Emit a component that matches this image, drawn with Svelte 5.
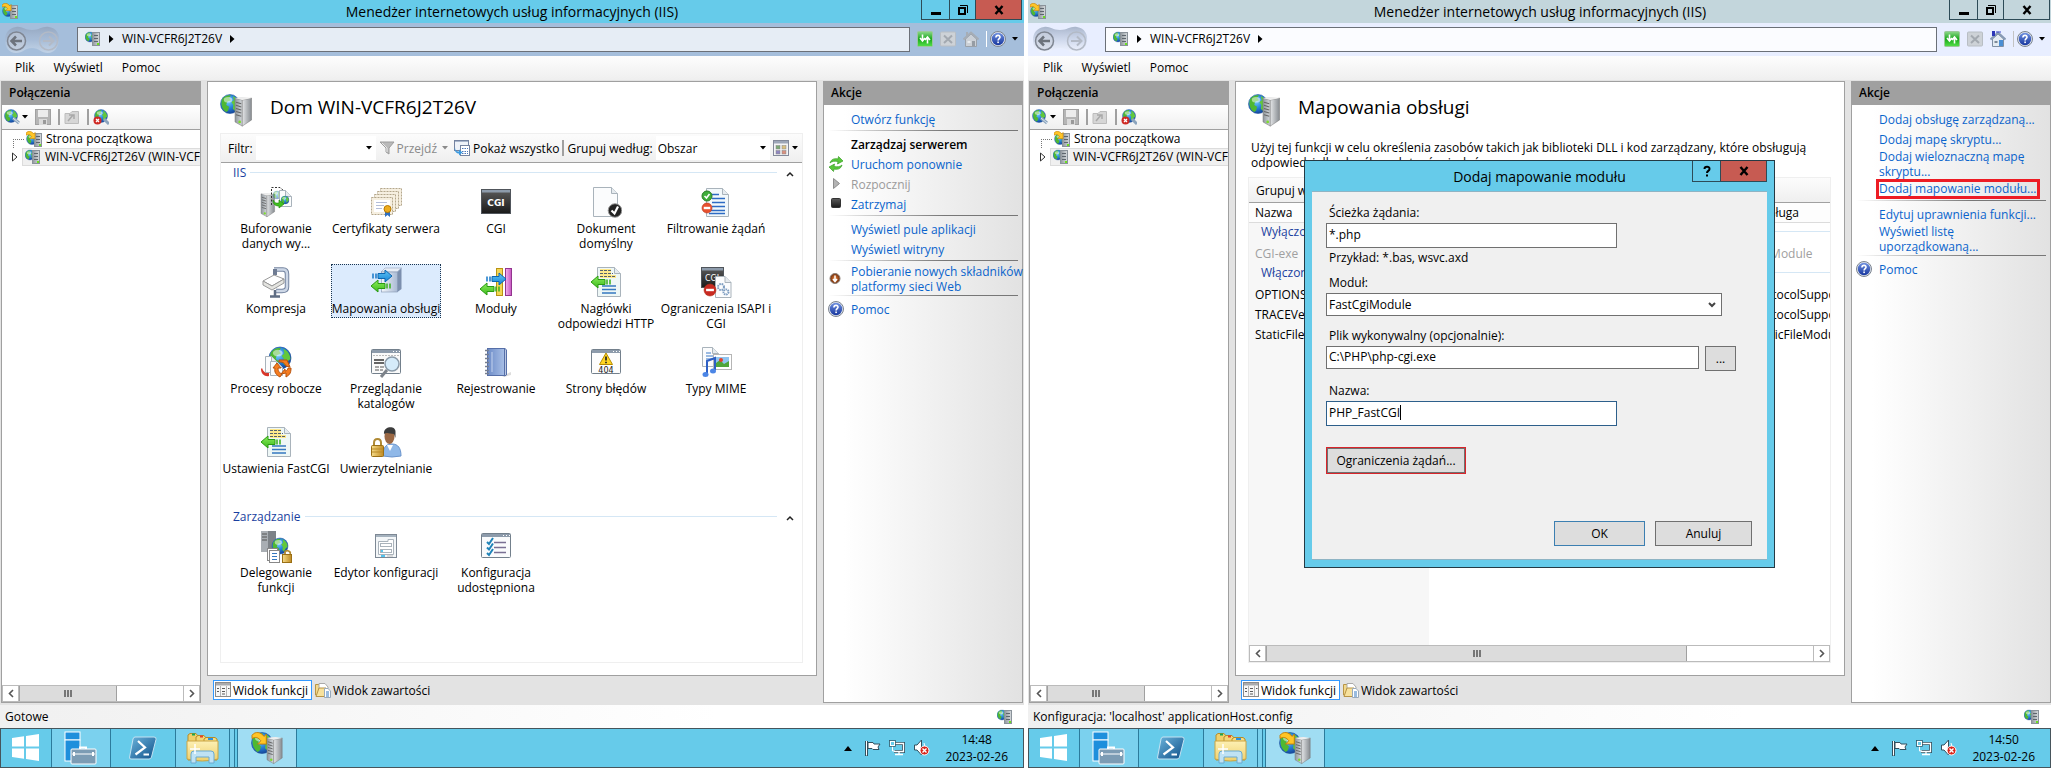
<script>
  const svg = (w, h, body) =>
    `<svg width="${w}" height="${h}" viewBox="0 0 ${w} ${h}" fill="none" aria-hidden="true">${body}</svg>`;

  // shared drawing parts
  const globe = (cx, cy, r) =>
    `<g transform="translate(${cx} ${cy}) scale(${r / 10})">
      <circle r="10" fill="url(#gGlobe)" stroke="#1d4f9c" stroke-width=".6"/>
      <path d="M-8.500 -4.500C-6 -9 -1 -9.500 1 -9L-1 -6.500L1 -4L-3 -2.500L-4 1L-1 3L-2 7L-4 8.500C-8 6 -10 1 -8.500 -4.500Z" fill="#4fb832"/>
      <path d="M3 -8.500C7 -7 9.500 -3 9.500 1L7 3L5 7L3 5L3.500 1L1.500 -2L4 -4Z" fill="#62c83c"/>
      <ellipse cx="-2" cy="-4.500" rx="4.500" ry="3" fill="#fff" opacity=".5"/></g>`;
  const tower = (x, y, s) =>
    `<g transform="translate(${x} ${y}) scale(${s})">
      <path d="M0 1L9 0V26L0 22Z" fill="#d3d7da"/><path d="M0 1L7 3V28L0 24Z" fill="url(#gMetal)" stroke="#777" stroke-width=".5"/>
      <path d="M7 3L16 1V22L7 28Z" fill="url(#gSide)" stroke="#777" stroke-width=".5"/><path d="M0 1L9 0L16 1L7 3Z" fill="#eee"/>
      <path d="M1 5L6 6.500M1 8L6 9.500M1 11L6 12.500M1 14L6 15.500M1 17L6 18.500" stroke="#666"/>
      <circle cx="4.500" cy="24" r="1.300" fill="#7bdc2c"/></g>`;
  const miniTower = (x, y) =>
    `<g transform="translate(${x} ${y})"><rect x=".5" y=".5" width="7" height="13" fill="url(#gMetal)" stroke="#8a929a"/>
      <path d="M2 3.500H6M2 6.500H6M2 9.500H6" stroke="#5e666e"/><rect x="5" y="11" width="2" height="2" fill="#6be01e"/></g>`;
  const page = (x, y, w, h, fill = '#fbfcfd') =>
    `<path d="M${x} ${y}H${x + w - 6}L${x + w} ${y + 6}V${y + h}H${x}Z" fill="${fill}" stroke="#a9b3bb"/>
     <path d="M${x + w - 6} ${y}V${y + 6}H${x + w}" fill="#e6ebef" stroke="#a9b3bb"/>`;
  const greenLeft = (x, y) =>
    `<g transform="translate(${x} ${y})"><path d="M0 6L7 0V3.500H14V8.500H7V12Z" fill="url(#gGreen)" stroke="#2b9a12"/>
      <path d="M16 3.500V8.500M19 3.500V8.500" stroke="#36b11a" stroke-width="1.500"/></g>`;
  const blueRight = (x, y) =>
    `<g transform="translate(${x} ${y})"><path d="M20 6L13 0V3.500H6V8.500H13V12Z" fill="url(#gBlue)" stroke="#0d66b0"/>
      <path d="M1 3.500V8.500M4 3.500V8.500" stroke="#1577c8" stroke-width="1.500"/></g>`;
  const goldArrow = (x, y, s) =>
    `<path transform="translate(${x} ${y}) scale(${s})" d="M0 3C3 -1 8 0 11 4L13 2V11H5L8 8C6 5 3 4 0 6Z" fill="#ffc527" stroke="#c07a00" stroke-width=".8"/>`;
  const frame = (fill) =>
    `<rect x="1.500" y="3.500" width="29" height="24" rx="1" fill="${fill}" stroke="#73808c"/>
     <rect x="2" y="4" width="28" height="3" fill="#8d9bab"/><path d="M23 5.500H24M26 5.500H27M29 5.500H30" stroke="#fff"/>`;
  const noEntry = (cx, cy, r, c) =>
    `<circle cx="${cx}" cy="${cy}" r="${r}" fill="${c}" stroke="#b3341c" stroke-width=".6"/><rect x="${cx - r * 0.65}" y="${cy - 1.2}" width="${r * 1.3}" height="2.400" fill="#fff"/>`;
  const headerDoc =
    page(7.5, 1.5, 23, 29, '#eef7f6') +
    `<path d="M10 4.500H21M10 7.500H21M10 10.500H26" stroke="#ffe88a" stroke-width="3"/>
     <path d="M10 4.500H21M10 7.500H23M10 10.500H26" stroke="#55606c" stroke-dasharray="3 1"/>
     <path d="M12 20H26M12 23.500H26M12 27H26" stroke="#3578c0" stroke-width="1.500"/>` + greenLeft(1, 10);

  const icons = {
    app: svg(16, 16, globe(6, 8, 5.5) + miniTower(8, 2) + goldArrow(0, 0, 0.7)),
    node: svg(16, 16, globe(5, 6, 5) + miniTower(7, 1)),
    connect: svg(16, 16, globe(7, 7, 6.5) + `<path d="M9 9L15 14" stroke="#8ba4bd" stroke-width="3"/><path d="M9 9L15 14" stroke="#d8e4ee"/>`),
    disconnect: svg(16, 16, globe(8, 7, 6.5) + `<path d="M11 10L16 15" stroke="#8ba4bd" stroke-width="3"/><circle cx="4.500" cy="11.500" r="4" fill="#cf2a24"/><path d="M3 10L6 13M6 10L3 13" stroke="#fff" stroke-width="1.300"/>`),
    save: svg(16, 16, `<rect x=".5" y=".5" width="15" height="15" fill="#b5b5b5" stroke="#a0a0a0"/><rect x="3" y="1" width="10" height="7" fill="#ececec"/><rect x="4" y="10" width="8" height="6" fill="#dadada"/><rect x="8" y="11" width="3" height="4" fill="#999"/>`),
    folderUp: svg(16, 16, `<path d="M1 4.500H6L8 2.500H14.500V14.500H1Z" fill="#d6d6d6" stroke="#bcbcbc"/><path d="M4 12L9 6M5 6H10V10" stroke="#a9a9a9" stroke-width="1.500"/>`),
    refresh: svg(16, 16, `<rect x=".5" y=".5" width="15" height="15" rx="1" fill="url(#gGreenBox)" stroke="#9cc79c"/><path d="M5.500 3.500V9M3 7L5.500 10L8 7M10.500 12.500V7M8 9L10.500 6L13 9" stroke="#fff" stroke-width="1.600"/>`),
    stopNav: svg(16, 16, `<rect x=".5" y="1" width="15" height="14" rx="1" fill="#cdd2d7" stroke="#b8bec4"/><path d="M4 4.500L12 12M12 4.500L4 12" stroke="#a3a9b0" stroke-width="2"/>`),
    homeGray: svg(16, 16, `<path d="M2.500 8V15.500H13.500V8L8 3Z" fill="#cbd0d6" stroke="#9aa1a9"/><path d="M.5 8.500L8 1.500L15.500 8.500" stroke="#a6adb5" stroke-width="2"/><rect x="3" y="1" width="2" height="4" fill="#a6adb5"/><rect x="9" y="10" width="3" height="5" fill="#959ca4"/><rect x="4.500" y="10" width="3" height="2" fill="#e8ebee"/>`),
    home: svg(16, 16, `<path d="M2.500 8V15.500H13.500V8L8 3Z" fill="#e4ebf2" stroke="#8090a4"/><path d="M.5 8.500L8 1.500L15.500 8.500" stroke="#8699b4" stroke-width="2"/><rect x="2" y="0" width="3" height="5" fill="#2b35b8"/><path d="M6 1H11" stroke="#3a46c8"/><rect x="9" y="9" width="4" height="6" fill="#4b8fd4"/><rect x="4.500" y="10" width="3" height="2" fill="#7d8a98"/>`),
    help: svg(16, 16, `<circle cx="8" cy="8" r="7.500" fill="#dfe5ee" stroke="#7c848f"/><circle cx="8" cy="8" r="6.200" fill="url(#gHelp)"/><path d="M5.900 6.500C6 3.600 10.200 3.800 10 6.300C9.900 7.700 8.100 7.700 8.100 9.500" stroke="#fff" stroke-width="1.600"/><rect x="7.300" y="10.500" width="1.600" height="1.600" fill="#fff"/>`),
    funnel: svg(16, 16, `<path d="M1 2H15L10 8V14L7 12V8Z" fill="#b9b9b9" stroke="#9c9c9c"/><path d="M3 3L8 8V12" stroke="#e9e9e9"/>`),
    showAll: svg(16, 16, `<rect x=".5" y=".5" width="14" height="10" fill="#eef2f8" stroke="#7583a0"/><path d="M1 1.500H14" stroke="#a9b6cc"/><rect x="6.500" y="5.500" width="9" height="10" fill="#fff" stroke="#7583a0"/><path d="M8 8.500H14M8 11.500H14M8 13.500H14" stroke="#4b76b8" stroke-dasharray="1.500 1"/><path d="M1 7C1 11 3 11.500 5 11.500V9.500L8.500 12.500L5 15.500V13.500C2 13.500 0 11 1 7Z" fill="#3d9be0"/>`),
    viewMode: svg(16, 16, `<rect x=".5" y=".5" width="15" height="15" fill="#f4f4f6" stroke="#83899a"/><rect x="1" y="1" width="14" height="2.500" fill="#9da6b8"/><rect x="3" y="5.500" width="4" height="3.500" fill="#7ba874" stroke="#888" stroke-width=".5"/><rect x="9" y="5.500" width="4" height="3.500" fill="#d9bf80" stroke="#888" stroke-width=".5"/><rect x="3" y="10.500" width="4" height="3.500" fill="#8f86c0" stroke="#888" stroke-width=".5"/><rect x="9" y="10.500" width="4" height="3.500" fill="#d9907f" stroke="#888" stroke-width=".5"/>`),
    restart: svg(16, 16, `<path d="M2 7C3 3 7 2 10 3L10.500 .5L15 5L9.500 8L10 5.500C7 5 4 5 2 7Z" fill="#58c83a" stroke="#3a9c26" stroke-width=".7"/><path d="M14 9C13 13 9 14 6 13L5.500 15.500L1 11L6.500 8L6 10.500C9 11 12 11 14 9Z" fill="#58c83a" stroke="#3a9c26" stroke-width=".7"/>`),
    play: svg(16, 16, `<path d="M5.500 2.500L11.500 7.500L5.500 12.500Z" fill="#b4b4b4" stroke="#8e8e8e"/>`),
    stop: svg(16, 16, `<rect x="3.500" y="2.500" width="9" height="9" rx="1" fill="url(#gDark)" stroke="#333"/>`),
    download: svg(16, 16, `<circle cx="7" cy="7.500" r="5" fill="url(#gBrown)" stroke="#8b8078"/><path d="M7 4.500V10M5 8L7 10.500L9 8" stroke="#fff" stroke-width="1.500"/>`),
    featuresTab: svg(16, 16, `<rect x=".5" y=".5" width="15" height="14" fill="#f7f7f7" stroke="#8a8a8a"/><rect x="1" y="1" width="14" height="2.500" fill="#a9abae"/><path d="M5.500 4V14M11.500 4V14" stroke="#b5b5b5"/><path d="M2 6.500H4M2 9.500H4M7 6.500H10M7 9.500H10M7 12H10M13 6.500H14.500" stroke="#5b5b5b"/>`),
    contentTab: svg(16, 16, `<path d="M.5 13V2.500H5L6.500 4H8V13Z" fill="#f3d98b" stroke="#b89446"/><path d="M4 1.500H10L13 5V13H4Z" fill="#fff" stroke="#aaa"/><path d="M1 14.500L4 6H11V14.500Z" fill="#f7e19c" stroke="#b89446"/><path d="M9.500 6.500H13L15.500 9V15.500H9.500Z" fill="#fff" stroke="#9ab"/><path d="M11 10H14M11 12H14M11 14H14" stroke="#3578c0"/>`),

    iisBig: svg(32, 34, globe(10, 11, 9.5) + tower(15, 4, 1.04)),
    caching: svg(32, 32, tower(1, 7, 0.85) + `<path d="M11.500 19V1.500H20L24 5V8" stroke="#333" stroke-dasharray="2 1.500"/>` + `<g opacity=".5">${globe(17, 9, 4)}</g>` + page(19.5, 4.5, 12, 16) + globe(25, 14, 4) + `<path d="M13 14C15 18 17 17 19 17V14L24 18L19 22V20C15 20 13 18 13 14Z" fill="#42c21f" stroke="#258a10" stroke-width=".7"/>`),
    certs: svg(32, 32, `<g fill="#f6efe0" stroke="#b4a78c" stroke-dasharray="2 1"><rect x="10.500" y="2.500" width="21" height="17"/><rect x="7.500" y="5.500" width="21" height="17"/><rect x="4.500" y="8.500" width="21" height="17"/><rect x="1.500" y="11.500" width="21" height="17"/></g><rect x="4" y="14" width="16" height="12" fill="#fff"/><path d="M6 16.500H17M6 19.500H14M6 22.500H12" stroke="#b4bed8"/><path d="M15 24V31L17.500 29L20 31V24Z" fill="#2f6fc0"/><circle cx="17.500" cy="23" r="3.500" fill="#edac1f" stroke="#b67800"/>`),
    cgi: svg(32, 32, `<rect x="1.500" y="3.500" width="29" height="24" fill="url(#gDark)" stroke="#50555b"/><rect x="2" y="4" width="28" height="2.500" fill="#8d9bab"/><text x="16" y="19.500" text-anchor="middle" font-family="DejaVu Sans, sans-serif" font-weight="bold" font-size="9" fill="#fff">CGI</text>`),
    defaultDoc: svg(32, 32, page(3.5, 1.5, 24, 29) + `<circle cx="25" cy="24.500" r="6.800" fill="#222" stroke="#9a9a9a"/><path d="M21.500 24.500L24.500 27.500L28 20.500" stroke="#fff" stroke-width="2.200"/>`),
    filtering: svg(32, 32, page(6.5, 2.5, 22, 28, '#f2f8fb') + `<path d="M12 8.500H19M12 12.500H25M12 16.500H25M12 20.500H25M9 24.500H25M9 27.500H25" stroke="#2d6bc4" stroke-width="1.300"/><circle cx="7" cy="10" r="5" fill="#3fae3a" stroke="#287c26"/><path d="M4.500 10L6.500 12L9.500 8" stroke="#fff" stroke-width="1.600"/>` + noEntry(7, 22, 5, '#e8512f')),
    compress: svg(32, 32, `<path d="M14 3.500H23Q27 3.500 27 8V21Q27 25 22 25H16" stroke="#7484a0" stroke-width="4.500"/><path d="M14 3.500H23Q27 3.500 27 8V21Q27 25 22 25H16" stroke="#cdd7e6" stroke-width="2.500"/><path d="M15 3V9" stroke="#6e7b92" stroke-width="4"/><path d="M3 15L14 9L24 13L12 20Z" fill="#fff" stroke="#999"/><path d="M3 15V19L12 24L24 17V13L12 20Z" fill="#e4e4e0" stroke="#999"/><path d="M15 24V30M10 30.500H20" stroke="#5f6d84" stroke-width="2.500"/>`),
    handlers: svg(32, 32, `<path d="M11 6L15 2H31.500L27 6Z" fill="#e9eef6" stroke="#93a3bd" stroke-width=".6"/><rect x="11.500" y="6" width="16" height="20" fill="url(#gBox)" stroke="#8293b0" stroke-width=".6"/><path d="M27.500 6L31.500 2V23L27.500 26Z" fill="#7c8fae"/>` + blueRight(2, 4) + greenLeft(1, 14)),
    modules: svg(32, 32, `<rect x="16.500" y="2.500" width="6" height="27" fill="#f2d654" stroke="#b99312"/><rect x="25.500" y="2.500" width="6" height="27" fill="url(#gPink)" stroke="#92348e"/>` + blueRight(6, 7) + greenLeft(0, 17)),
    headers: svg(32, 32, headerDoc),
    isapi: svg(32, 32, `<rect x="1.500" y="1.500" width="22" height="20" fill="url(#gDark)" stroke="#50555b"/><rect x="2" y="2" width="21" height="2.500" fill="#8d9bab"/><text x="12" y="15" text-anchor="middle" font-family="DejaVu Sans, sans-serif" font-size="8" fill="#fff">CGI</text>` + page(15.5, 10.5, 15.5, 21) + `<circle cx="21" cy="21" r="3" stroke="#7c9cc0" stroke-width="2" stroke-dasharray="1.600 .8"/><circle cx="26" cy="26" r="2.500" stroke="#7c9cc0" stroke-width="2" stroke-dasharray="1.500 .7"/>` + noEntry(10, 24, 6, '#c92a22')),
    workers: svg(32, 32, globe(20, 12, 11) + page(5.5, 10.5, 12, 16) + page(10.5, 15.5, 12, 14) + `<path d="M2 22C4 28 8 27 9 27V30C5 31 1 28 1 23Z" fill="#d8362a"/><path d="M19 14H27L30 21L26 20C24 16 22 16 19 16Z" fill="#f57c20" stroke="#b8520c"/><path d="M13 22L17 17L21 22H18C18 26 20 27 22 28L20 31C16 29 14 26 15 22Z" fill="#f57c20" stroke="#b8520c"/><path d="M31 22C31 28 29 29 26 31V27L21 28L25 23V25C27 25 28 23 28 22Z" fill="#f57c20" stroke="#b8520c"/>`),
    browse: svg(32, 32, frame('#fafafa') + `<path d="M3 9.500H29" stroke="#bbb" stroke-dasharray="2 1"/><path d="M4 14H14M4 17H14" stroke="#333" stroke-width="1.500"/><path d="M5 21H14M5 24H13" stroke="#555" stroke-dasharray="4 1"/><path d="M17 24L11 31" stroke="#7d838a" stroke-width="3"/><circle cx="22" cy="18" r="7" fill="#d5ebfa" stroke="#8a9aa8" stroke-width="1.500"/>`),
    logging: svg(32, 32, `<path d="M22 30L31 26V29L24 31Z" fill="#ddd"/><rect x="7.500" y="2.500" width="17" height="27" fill="url(#gBook)" stroke="#566fa8"/><path d="M24.500 2L26.500 4V29L24.500 30Z" fill="#b9c8e4" stroke="#566fa8"/><path d="M5 4.500H9M5 8.500H9M5 12.500H9M5 16.500H9M5 20.500H9M5 24.500H9M5 27.500H9" stroke="#777f90" stroke-width="1.500"/><path d="M12 6V26" stroke="#c4d3ee"/>`),
    errors: svg(32, 32, frame('#fdfdfd') + `<path d="M16 7L22.500 18.500H9.500Z" fill="#ffd521" stroke="#b48a00"/><path d="M16 10.500V14.500M16 15.700V17.300" stroke="#222" stroke-width="1.700"/><text x="16" y="26.500" text-anchor="middle" font-family="DejaVu Sans, sans-serif" font-size="8" fill="#222">404</text>`),
    mime: svg(32, 32, page(2.5, 1.5, 16, 19) + `<path d="M6 7H11M6 10H15M6 13H15" stroke="#3b79c6"/><rect x="13.500" y="8.500" width="18" height="15" fill="#fff" stroke="#b5b5b5"/><rect x="16" y="11" width="13" height="10" fill="#8fc4f0"/><path d="M16 21V17L20 14L24 18L29 15V21Z" fill="#4fa53a"/><circle cx="21" cy="14" r="2" fill="#e2412b"/><path d="M7 28V15L15 12V24" stroke="#2d5fc4" stroke-width="2"/><ellipse cx="5.500" cy="28.500" rx="3" ry="2.500" fill="#4c86e6"/><ellipse cx="13" cy="25" rx="3" ry="2.500" fill="#4c86e6"/>`),
    auth: svg(32, 32, `<path d="M13 30C13 20 17 18 22 18C28 18 31 22 31 30Q22 32 13 30Z" fill="#8fb8e8" stroke="#6a94cc"/><path d="M17 19L20 25L23 19Z" fill="#fff"/><ellipse cx="19.500" cy="10.500" rx="5" ry="7.500" fill="#9b6844"/><path d="M14 8C13 0 26 -1 25.500 6V12L24 8C20 8 17 6 14 8Z" fill="#3c3c3c"/><path d="M4 20V17Q4 13 7.500 13Q11 13 11 17V20" stroke="#b08a34" stroke-width="2"/><rect x="1.500" y="19.500" width="12" height="11" rx="1" fill="url(#gGold)" stroke="#9a6f15"/><path d="M2 23H13M2 26H13" stroke="#b98a28"/>`),
    delegation: svg(32, 34, `<rect x="1" y="1" width="7" height="21" fill="#a9aeb3"/><rect x="8" y="1" width="8" height="21" fill="#7d8287"/><path d="M2 4H7M2 7H7M2 10H7" stroke="#555"/>` + globe(20, 16, 8) + `<rect x="7.500" y="18.500" width="10" height="12" fill="#fff" stroke="#888"/><rect x="9.500" y="20.500" width="10" height="12" fill="#fff" stroke="#888"/><path d="M12 23.500H17M12 26.500H17M12 29.500H17" stroke="#3578c0"/><path d="M25 24V22Q26 20 28.500 21Q31 22 30 24" stroke="#b08a34" stroke-width="1.800"/><rect x="22.500" y="24.500" width="9" height="8" fill="url(#gGold)" stroke="#9a6f15"/>`),
    editor: svg(32, 32, `<rect x="5.500" y="4.500" width="21" height="23" fill="#f3f6f8" stroke="#7d8894"/><path d="M6 6H26" stroke="#a5b2be" stroke-width="2"/><path d="M8.500 11.500V24.500H23.500V9.500H18V11.500Z" fill="#fff" stroke="#aab3bb"/><rect x="10.500" y="13.500" width="11" height="3" stroke="#aab3bb"/><rect x="10.500" y="19.500" width="11" height="3" stroke="#aab3bb"/><path d="M11 21H13M11 26H15" stroke="#21b1e6" stroke-width="1.500"/><path d="M17 26H23" stroke="#bbb"/>`),
    shared: svg(32, 32, frame('#fafbfc') + `<path d="M14 12.500H26M14 17.500H26M14 22.500H26" stroke="#7a7094" stroke-width="1.300"/><path d="M7 12L9 14L13 8M7 17.500L9 19.500L13 13.500M7 23L9 25L13 19" stroke="#1f83b8" stroke-width="2"/>`),

    start: svg(28, 28, `<path d="M0 4L12 2.300V12.500H0ZM14 2L27 0V12.500H14ZM0 14.500H12V24.700L0 23ZM14 14.500H27V27L14 25Z" fill="#fff"/>`),
    serverMgr: svg(34, 34, `<rect x="1" y="1" width="15" height="8" fill="#1e8fdc" stroke="#fff"/><rect x="1" y="9" width="15" height="21" fill="#1e8fdc" stroke="#fff"/><path d="M16 18V16.500H22V18" stroke="#fff" stroke-width="2"/><rect x="7" y="18" width="25" height="15" rx="1" fill="#7c9cb4" stroke="#fff"/><path d="M8 23H31" stroke="#fff"/><path d="M10 21V25M29 21V25" stroke="#fff" stroke-width="2"/>`),
    powershell: svg(28, 24, `<path d="M6 1H25Q27.500 1 27 3.500L22.500 21Q22 23 20 23H2Q0 23 .6 21L4 3Q4.500 1 6 1Z" fill="url(#gPs)" stroke="#c4e2f2"/><path d="M9 5L16 11.500L6.500 18.500M14.500 18.500H20" stroke="#fff" stroke-width="2.200"/>`),
    explorer: svg(34, 32, `<path d="M2 28V3L4 1.500H10L12 4V28Z" fill="#f0d06a" stroke="#b48d2c"/><path d="M10 28V5L12 3.500H18L20 6V28Z" fill="#f3d778" stroke="#b48d2c"/><path d="M18 28V7L20 5.500H29L31 7V28Z" fill="#f5dc84" stroke="#b48d2c"/><rect x="6" y="1.500" width="3" height="2" fill="#1ba54c"/><rect x="14" y="3.500" width="3" height="2" fill="#e4402c"/><rect x="22" y="6" width="5" height="2" fill="#2a92e4"/><path d="M1 9H32V27Q16 31 1 27Z" fill="url(#gFolder)" stroke="#caa544"/><path d="M5 31V22Q5 19 8 19H25Q28 19 28 22V31H23V25H10V31Z" fill="#bfe2f4" stroke="#6aaad0"/><path d="M9 12V22M4 17H14" stroke="#fff" stroke-width="1.500"/>`),
    iisTask: svg(32, 34, globe(11, 12, 10.5) + tower(16, 6, 0.95) + goldArrow(1, 1, 1.1)),
    flag: svg(16, 16, `<path d="M1.500 1V16" stroke="#33505e" stroke-width="3"/><path d="M3 2.500H8L9 4H15L13 7L14 9.500H8L7 8.500H3Z" fill="#fff" stroke="#33505e"/><path d="M1.500 1V15.500" stroke="#fff"/>`),
    network: svg(16, 16, `<path d="M5 3.500H14.500V11.500H5" fill="#66cbea" stroke="#33505e" stroke-width="3"/><path d="M5 3.500H14.500V11.500H5M10 12V14.500M6 14.500H14" stroke="#fff" stroke-width="1.300"/><rect x="1.500" y="1.500" width="4" height="4" fill="#66cbea" stroke="#fff"/><path d="M3.500 6V11H6" stroke="#fff"/><rect x=".5" y=".5" width="6" height="6" stroke="#33505e" stroke-width=".7"/>`),
    sound: svg(18, 18, `<path d="M1.500 6H4L8.500 1V16L4 11H1.500Z" fill="#fff" stroke="#33505e"/><path d="M11 4Q13 8 11 12" stroke="#fff"/><circle cx="11.500" cy="11.500" r="4.500" fill="#d8261c" stroke="#fff"/><path d="M9.500 9.500L13.500 13.500M13.500 9.500L9.500 13.500" stroke="#fff" stroke-width="1.400"/>`),
    nav: svg(56, 28, `<path d="M12 1C18 0 20 4 28 4C36 4 38 0 45 1C53 2 56 9 55 15C54 22 50 27 44 27C37 27 35 22 28 22C21 22 19 27 12 27C5 27 1 21 1 14C1 7 5 2 12 1Z" fill="url(#gNav)"/><g stroke="#7f8692"><circle cx="12.500" cy="15" r="9" fill="#c9d0da" fill-opacity=".5" stroke-width="1.500"/><path d="M18 15H8M12 10.500L7.500 15L12 19.500" stroke="#6d737c" stroke-width="2.500"/></g><g stroke="#b3bac6"><circle cx="44.500" cy="15" r="9" stroke-width="1.500"/><path d="M39 15H48M45 10.500L49.500 15L45 19.500" stroke-width="2"/></g>`),
    min: svg(12, 12, `<path d="M1 9.500H11" stroke="#000" stroke-width="3"/>`),
    restore: svg(12, 12, `<rect x="2" y="4" width="6" height="6" stroke="#000" stroke-width="2"/><path d="M3 1.500H10.500V9" stroke="#000"/>`),
    close: svg(12, 12, `<path d="M2.500 2L9.500 10M9.500 2L2.500 10" stroke="#000" stroke-width="2.400"/>`),
    quest: svg(12, 12, `<path d="M3.500 4C3.500 1 8.700 1 8.500 4C8.500 6 6 5.800 6 8M6 9.500V11.500" stroke="#000" stroke-width="2"/>`),
    down: svg(6, 4, `<path d="M0 0H6L3 3.500Z" fill="#000"/>`),
    downGray: svg(6, 4, `<path d="M0 0H6L3 3.500Z" fill="#8a8a8a"/>`),
    right: svg(5, 8, `<path d="M0 0L4.500 4L0 8Z" fill="#000"/>`),
    up: svg(8, 5, `<path d="M0 5L4 0L8 5Z" fill="#000"/>`),
    chevUp: svg(8, 6, `<path d="M1 5L4 2L7 5" stroke="#222" stroke-width="1.500"/>`),
    chevDown: svg(8, 6, `<path d="M1 1L4 4L7 1" stroke="#444" stroke-width="2"/>`),
    chevLeft: svg(6, 9, `<path d="M5 1L1.500 4.500L5 8" stroke="#555" stroke-width="1.600"/>`),
    chevRight: svg(6, 9, `<path d="M1 1L4.500 4.500L1 8" stroke="#555" stroke-width="1.600"/>`),
    expand: svg(6, 10, `<path d="M.5 1L5 5L.5 9Z" fill="#fff" stroke="#333"/>`),
  };

  const groups = [
    { title: 'IIS', items: [
      ['caching', 'Buforowanie\ndanych wy...'], ['certs', 'Certyfikaty serwera'], ['cgi', 'CGI'],
      ['defaultDoc', 'Dokument\ndomyślny'], ['filtering', 'Filtrowanie żądań'],
      ['compress', 'Kompresja'], ['handlers', 'Mapowania obsługi'], ['modules', 'Moduły'],
      ['headers', 'Nagłówki\nodpowiedzi HTTP'], ['isapi', 'Ograniczenia ISAPI i\nCGI'],
      ['workers', 'Procesy robocze'], ['browse', 'Przeglądanie\nkatalogów'], ['logging', 'Rejestrowanie'],
      ['errors', 'Strony błędów'], ['mime', 'Typy MIME'],
      ['headers', 'Ustawienia FastCGI'], ['auth', 'Uwierzytelnianie'],
    ] },
    { title: 'Zarządzanie', items: [
      ['delegation', 'Delegowanie\nfunkcji'], ['editor', 'Edytor konfiguracji'], ['shared', 'Konfiguracja\nudostępniona'],
    ] },
  ];

  const serverActions = [
    [{ text: 'Otwórz funkcję' }],
    [
      { text: 'Zarządzaj serwerem', heading: true },
      { text: 'Uruchom ponownie', icon: 'restart' },
      { text: 'Rozpocznij', icon: 'play', disabled: true },
      { text: 'Zatrzymaj', icon: 'stop' },
    ],
    [{ text: 'Wyświetl pule aplikacji' }, { text: 'Wyświetl witryny' }],
    [{ text: 'Pobieranie nowych składników\nplatformy sieci Web', icon: 'download' }],
    [{ text: 'Pomoc', icon: 'help' }],
  ];
  const handlerActions = [
    [
      { text: 'Dodaj obsługę zarządzaną...' },
      { text: 'Dodaj mapę skryptu...' },
      { text: 'Dodaj wieloznaczną mapę\nskryptu...' },
      { text: 'Dodaj mapowanie modułu...', marked: true },
    ],
    [{ text: 'Edytuj uprawnienia funkcji...' }, { text: 'Wyświetl listę\nuporządkowaną...' }],
    [{ text: 'Pomoc', icon: 'help' }],
  ];

  let selected = $state('Mapowania obsługi');
  let path = $state('*.php');
  let executable = $state('C:\\PHP\\php-cgi.exe');
  let name = $state('PHP_FastCGI');
</script>

{#snippet ic(n)}<span class="ic">{@html icons[n]}</span>{/snippet}

{#snippet scrollbar(thumb)}
  <div class="scrollbar">
    <button aria-label="Przewiń w lewo">{@render ic('chevLeft')}</button>
    <div class="track"><div class="thumb" style="width: {thumb}%"><i></i><i></i><i></i></div></div>
    <button aria-label="Przewiń w prawo">{@render ic('chevRight')}</button>
  </div>
{/snippet}

{#snippet featuresView()}
  <div class="heading">{@render ic('iisBig')}<h1>Dom WIN-VCFR6J2T26V</h1></div>
  <div class="box">
    <div class="filterbar">
      <label for="filter">Filtr:</label>
      <div class="combo filter"><input id="filter" type="text" />{@render ic('down')}</div>
      <button class="tool go" disabled>{@render ic('funnel')}Przejdź {@render ic('downGray')}</button>
      <button class="tool">{@render ic('showAll')}Pokaż wszystko</button>
      <span class="vsep"></span>
      <label for="group">Grupuj według:</label>
      <div class="combo group"><select id="group"><option>Obszar</option></select>{@render ic('down')}</div>
      <button class="tool" aria-label="Widok">{@render ic('viewMode')}{@render ic('down')}</button>
    </div>
    {#each groups as g}
      <section class="feature-group">
        <h2>{g.title}<span class="rule"></span><button aria-label="Zwiń">{@render ic('chevUp')}</button></h2>
        <div class="features">
          {#each g.items as [icon, label]}
            <button class="feature" class:selected={selected === label} onclick={() => (selected = label)}>
              {@render ic(icon)}<span>{label}</span>
            </button>
          {/each}
        </div>
      </section>
    {/each}
  </div>
{/snippet}

{#snippet handlersView()}
  <div class="heading">{@render ic('iisBig')}<h1>Mapowania obsługi</h1></div>
  <p class="intro">{'Użyj tej funkcji w celu określenia zasobów takich jak biblioteki DLL i kod zarządzany, które obsługują\nodpowiedzi dla określonych typów żądań.'}</p>
  <div class="box list">
    <div class="filterbar low"><span>Grupuj według:</span></div>
    <div class="table-area">
      <table>
        <colgroup><col class="c-name" /><col /><col class="c-handler" /></colgroup>
        <thead><tr><th>Nazwa</th><th></th><th>Obsługa</th></tr></thead>
        <tbody>
          <tr class="group-row"><td colspan="3"><div>Wyłączone<span class="rule"></span></div></td></tr>
          <tr class="off"><td>CGI-exe</td><td></td><td>CgiModule</td></tr>
          <tr class="group-row"><td colspan="3"><div>Włączone<span class="rule"></span></div></td></tr>
          <tr><td>OPTIONSVerbHandler</td><td></td><td>ProtocolSupportModule</td></tr>
          <tr><td>TRACEVerbHandler</td><td></td><td>ProtocolSupportModule</td></tr>
          <tr><td>StaticFile</td><td></td><td>StaticFileModule</td></tr>
        </tbody>
      </table>
    </div>
    {@render scrollbar(77)}
  </div>
{/snippet}

{#snippet dialog()}
  <div class="dialog" role="dialog" aria-labelledby="dlg-title">
    <header>
      <h2 id="dlg-title">Dodaj mapowanie modułu</h2>
      <div class="winbtns"><button class="q" aria-label="Pomoc">{@render ic('quest')}</button><button class="x" aria-label="Zamknij">{@render ic('close')}</button></div>
    </header>
    <form onsubmit={(e) => e.preventDefault()}>
      <label for="path">Ścieżka żądania:</label>
      <div class="field short"><input id="path" type="text" bind:value={path} /></div>
      <p class="hint">Przykład: *.bas, wsvc.axd</p>
      <label for="module">Moduł:</label>
      <div class="field medium select"><select id="module"><option>FastCgiModule</option></select>{@render ic('chevDown')}</div>
      <label for="exe">Plik wykonywalny (opcjonalnie):</label>
      <div class="pair"><div class="field low grow"><input id="exe" type="text" bind:value={executable} /></div><button class="btn dots" type="button">...</button></div>
      <label for="name">Nazwa:</label>
      <div class="field short focus"><input id="name" type="text" bind:value={name} /><span class="caret"></span></div>
      <button class="btn limits" type="button">Ograniczenia żądań...</button>
      <div class="buttons"><button class="btn ok" type="submit">OK</button><button class="btn cancel" type="button">Anuluj</button></div>
    </form>
  </div>
{/snippet}

{#snippet win(w)}
  <div class="window" class:inactive={w.inactive}>
    <header class="title">
      {@render ic('app')}
      <span class="caption">Menedżer internetowych usług informacyjnych (IIS)</span>
      <div class="winbtns">
        <button class="m" aria-label="Minimalizuj">{@render ic('min')}</button><button class="r" aria-label="Przywróć">{@render ic('restore')}</button><button class="x" aria-label="Zamknij">{@render ic('close')}</button>
      </div>
    </header>
    <div class="navbar">
      <button class="history" aria-label="Wstecz i dalej">{@render ic('nav')}</button>
      <div class="address">{@render ic('node')}{@render ic('right')}<span>WIN-VCFR6J2T26V</span>{@render ic('right')}</div>
      <div class="navtools">
        <button aria-label="Odśwież">{@render ic('refresh')}</button>
        <button aria-label="Zatrzymaj" disabled>{@render ic('stopNav')}</button>
        <button aria-label="Strona główna">{@render ic(w.inactive ? 'home' : 'homeGray')}</button>
        <button class="helpbtn" aria-label="Pomoc">{@render ic('help')}{@render ic('down')}</button>
      </div>
    </div>
    <nav class="menu"><button>Plik</button><button>Wyświetl</button><button>Pomoc</button></nav>
    <main>
      <aside class="panel tree">
        <h3>Połączenia</h3>
        <div class="toolbar">
          <button aria-label="Połącz">{@render ic('connect')}{@render ic('down')}</button>
          <button aria-label="Zapisz" disabled>{@render ic('save')}</button><span class="vsep"></span>
          <button aria-label="W górę" disabled>{@render ic('folderUp')}</button><span class="vsep"></span>
          <button aria-label="Rozłącz">{@render ic('disconnect')}</button>
        </div>
        <ul>
          <li><span class="lead"></span><a href="#start">{@render ic('app')}Strona początkowa</a></li>
          <li class="current"><span class="lead">{@render ic('expand')}</span><a href="#server">{@render ic('node')}WIN-VCFR6J2T26V (WIN-VCFR6J2T26V\Administrator)</a></li>
        </ul>
        {@render scrollbar(60)}
      </aside>
      <div class="center">
        <div class="content">{@render w.view()}</div>
        <div class="tabs"><button class="on">{@render ic('featuresTab')}Widok funkcji</button><button>{@render ic('contentTab')}Widok zawartości</button></div>
      </div>
      <aside class="panel actions">
        <h3>Akcje</h3>
        <div class="action-list">
          {#each w.actions as block}
            <div class="block">
              {#each block as a}
                <div class="action">
                  {#if a.icon}{@render ic(a.icon)}{:else}<span></span>{/if}
                  {#if a.heading}<strong>{a.text}</strong>
                  {:else if a.disabled}<span class="dim">{a.text}</span>
                  {:else}<a class:marked={a.marked} href="#action">{a.text}</a>{/if}
                </div>
              {/each}
            </div>
          {/each}
        </div>
      </aside>
    </main>
    <footer class="status"><span>{w.status}</span>{@render ic('node')}</footer>
    <div class="taskbar">
      <button class="t-start" aria-label="Start">{@render ic('start')}</button>
      <button class="t-open" aria-label="Menedżer serwera">{@render ic('serverMgr')}</button>
      <button class="t-plain" aria-label="PowerShell">{@render ic('powershell')}</button>
      <button class="t-open t-many" aria-label="Eksplorator">{@render ic('explorer')}</button>
      <span class="t-stack"></span>
      <button class="t-active" aria-label="IIS">{@render ic('iisTask')}</button>
      <div class="tray">{@render ic('up')}{@render ic('flag')}{@render ic('network')}{@render ic('sound')}
        <time>{w.time}<br />2023-02-26</time></div>
    </div>
    {#if w.inactive}{@render dialog()}{/if}
  </div>
{/snippet}

<svg class="defs" width="0" height="0" aria-hidden="true">
  <defs>
    <radialGradient id="gGlobe" cx=".4" cy=".35" r=".7"><stop offset="0" stop-color="#7fd4fa" /><stop offset=".5" stop-color="#2a86dc" /><stop offset="1" stop-color="#123f94" /></radialGradient>
    <linearGradient id="gMetal"><stop offset="0" stop-color="#8f969c" /><stop offset="1" stop-color="#d7dbde" /></linearGradient>
    <linearGradient id="gSide"><stop offset="0" stop-color="#e4e6e8" /><stop offset="1" stop-color="#858a8f" /></linearGradient>
    <linearGradient id="gGreen" x2="0" y2="1"><stop offset="0" stop-color="#8ced5c" /><stop offset="1" stop-color="#3cbb1c" /></linearGradient>
    <linearGradient id="gBlue" x2="0" y2="1"><stop offset="0" stop-color="#62c6f6" /><stop offset="1" stop-color="#1583d4" /></linearGradient>
    <linearGradient id="gGreenBox" x2="0" y2="1"><stop offset="0" stop-color="#8ed88c" /><stop offset=".5" stop-color="#19a81b" /><stop offset="1" stop-color="#55e04a" /></linearGradient>
    <linearGradient id="gHelp" x2="0" y2="1"><stop offset="0" stop-color="#6f90e0" /><stop offset="1" stop-color="#16369e" /></linearGradient>
    <linearGradient id="gDark" x2="0" y2="1"><stop offset="0" stop-color="#5c5c5c" /><stop offset="1" stop-color="#1a1a1a" /></linearGradient>
    <radialGradient id="gBrown"><stop offset="0" stop-color="#f0863c" /><stop offset="1" stop-color="#6e2c0a" /></radialGradient>
    <linearGradient id="gBox"><stop offset="0" stop-color="#f3f6fa" /><stop offset="1" stop-color="#a9bad4" /></linearGradient>
    <linearGradient id="gPink"><stop offset="0" stop-color="#f2b4ee" /><stop offset="1" stop-color="#c653c0" /></linearGradient>
    <linearGradient id="gBook"><stop offset="0" stop-color="#6d8cc8" /><stop offset="1" stop-color="#a8bfe6" /></linearGradient>
    <linearGradient id="gGold"><stop offset="0" stop-color="#f6dc8a" /><stop offset="1" stop-color="#c08a20" /></linearGradient>
    <linearGradient id="gPs" x2="1" y2="1"><stop offset="0" stop-color="#6cb4dc" /><stop offset="1" stop-color="#0f5089" /></linearGradient>
    <linearGradient id="gFolder" x2="0" y2="1"><stop offset="0" stop-color="#fdf0b4" /><stop offset="1" stop-color="#efd06c" /></linearGradient>
    <linearGradient id="gNav" x2="0" y2="1"><stop offset="0" stop-color="#8e9db5" stop-opacity=".7" /><stop offset=".5" stop-color="#a9b8cf" stop-opacity=".4" /><stop offset="1" stop-color="#fff" stop-opacity=".3" /></linearGradient>
  </defs>
</svg>

<div class="screen">
  {@render win({ view: featuresView, actions: serverActions, status: 'Gotowe', time: '14:48' })}
  {@render win({ view: handlersView, actions: handlerActions, status: "Konfiguracja: 'localhost' applicationHost.config", time: '14:50', inactive: true })}
</div>

<style>
  :global(body) { margin: 0; background: #fff; }
  .screen {
    display: grid; grid-template-columns: 1024fr 1023fr; gap: 4px; min-height: 100vh;
    font: 12px/15px "Open Sans", "Noto Sans", sans-serif; color: #000;
  }
  .defs { position: absolute; }
  .screen :global(*) { box-sizing: border-box; }
  h1, h2, h3, p, ul { margin: 0; padding: 0; font-weight: normal; font-size: inherit; }
  button, input, select { font: inherit; color: inherit; margin: 0; padding: 0; border: 0; background: none; border-radius: 0; outline: 0; }
  a { text-decoration: none; color: inherit; }
  .ic { display: inline-flex; flex: none; }
  .ic :global(svg) { display: block; }

  .window { position: relative; display: flex; flex-direction: column; min-width: 0; background: #e3e3e3; }
  .title { display: grid; grid-template-columns: 101px 1fr 101px; height: 23px; background: #66cbea; padding: 0 2px; }
  .title > .ic { padding-top: 3px; }
  .caption { text-align: center; font-size: 14px; line-height: 23px; }
  .inactive .title { background: #c3d6dc; padding-right: 1px; }
  .winbtns { display: flex; justify-content: flex-end; }
  .winbtns button { display: grid; place-items: center; height: 20px; border: 1px solid #2d4b57; border-top: 0; border-left: 0; }
  .winbtns .m, .winbtns .q { width: 29px; border-left: 1px solid #2d4b57; }
  .winbtns .r { width: 26px; }
  .winbtns .x { width: 46px; background: #c75b52; }
  .inactive .title .x { background: none; }

  .navbar { display: flex; align-items: center; height: 33px; background: #a5bedb; padding-left: 4px; }
  .inactive .navbar { background: #e8eeff; }
  .history { display: flex; width: 73px; flex: none; }
  .address { flex: 1; display: flex; align-items: center; gap: 8px; height: 25px; padding: 0 7px 2px; background: #e6edf5; border: 1px solid #6b7078; }
  .inactive .address { background: #fbfcff; }
  .navtools { display: flex; gap: 7px; padding: 0 6px 2px 7px; }
  .navtools button { display: flex; align-items: center; }
  .helpbtn { gap: 6px; border-left: 1px solid #fff; padding-left: 3px; }
  .inactive .helpbtn { border-left-color: #c3c3c3; }

  .menu { display: flex; gap: 19px; height: 24px; padding: 0 15px 1px; background: linear-gradient(#fdfdfd, #efefef); }
  main { flex: 1; display: grid; grid-template-columns: 200px minmax(0, 1fr) 200px; gap: 6px; padding: 1px 1px 2px; }
  .inactive main { padding-right: 0; }
  .panel { display: flex; flex-direction: column; min-width: 0; border: 1px solid #a0a0a0; border-top: 0; background: #fff; }
  .panel h3 { height: 24px; background: #a0a0a0; padding-left: 7px; font-weight: 600; line-height: 24px; }
  .toolbar { display: flex; align-items: center; height: 25px; padding: 0 2px; gap: 7px; border-bottom: 1px solid #a0a0a0; background: linear-gradient(#fff, #efefef); }
  .toolbar button { display: flex; align-items: center; gap: 2px; }
  .vsep { width: 2px; height: 16px; background: #a0a0a0; }
  .toolbar .vsep { margin-right: -3px; }
  .tree ul { flex: 1; list-style: none; overflow: hidden; }
  .tree li { display: flex; height: 18px; }
  .lead { display: flex; align-items: center; width: 20px; flex: none; padding-left: 10px; }
  li:first-child .lead { margin: 9px 0 0 11px; width: 9px; border: 1px dotted #777; border-width: 1px 0 0 1px; }
  .tree a { flex: 1; display: flex; align-items: center; gap: 4px; padding: 0 0 1px 2px; white-space: nowrap; overflow: hidden; }
  .current a { background: #f0f0f0; border: 1px solid #dcdcdc; border-right: 0; }

  .scrollbar { display: flex; flex: none; height: 17px; background: #fff; border: 1px solid #bbb; border-width: 1px 0; }
  .scrollbar button { display: grid; place-items: center; width: 17px; border: 1px solid #bbb; border-width: 0 1px; }
  .track { flex: 1; display: flex; }
  .thumb { display: flex; align-items: center; justify-content: center; gap: 1px; background: #dcdcdc; border: 1px solid #a0a0a0; border-width: 0 1px; }
  .thumb i { width: 2px; height: 7px; background: #777; }

  .center { display: flex; flex-direction: column; }
  .content { flex: 1; display: flex; flex-direction: column; padding: 11px 13px 12px 12px; border: 1px solid #a0a0a0; background: #fff; }
  .heading { display: flex; gap: 18px; height: 40px; }
  .heading h1 { font-size: 19px; line-height: 28px; }
  .box { flex: 1; display: flex; flex-direction: column; border: 1px solid #efefef; min-width: 0; }
  .filterbar { display: flex; align-items: center; gap: 3px; height: 29px; padding-left: 7px; background: linear-gradient(#fcfcfc, #efefef); border-bottom: 1px solid #a0a0a0; white-space: nowrap; }
  .filterbar.low { height: 25px; }
  .combo { display: flex; align-items: center; height: 24px; background: #fff; padding: 0 4px; }
  .combo input, .combo select { flex: 1; min-width: 0; width: 0; appearance: none; }
  .combo.filter { width: 120px; }
  .combo.group { flex: 1; padding-left: 2px; }
  .tool { display: flex; align-items: center; gap: 3px; }
  .tool:last-child { padding-right: 4px; }
  .go { color: #8a8a8a; gap: 2px; }
  .go .ic:last-child { padding: 0 3px; }
  .feature-group { margin: 1px 0 3px; }
  .feature-group h2 { display: flex; align-items: center; gap: 4px; height: 20px; padding: 0 8px 4px 12px; color: #1a3fa0; }
  .feature-group h2 button { padding-left: 5px; }
  .rule { flex: 1; height: 1px; background: #d5e7f5; }
  .features { display: grid; grid-template-columns: repeat(auto-fill, 110px); grid-auto-rows: 80px; align-items: start; }
  .feature { display: flex; flex-direction: column; align-items: center; height: 54px; padding-top: 1px; gap: 3px; border: 1px solid transparent; }
  .feature > .ic { height: 32px; }
  .feature span { white-space: pre; }
  .feature.selected { background: #dcebfd; border: 1px dotted #1a3550; }

  .intro { padding: 7px 3px 7px; white-space: pre; overflow: hidden; }
  .list { overflow: hidden; }
  .table-area { flex: 1; background: linear-gradient(90deg, #f7f7f7 180px, #fff 180px); }
  table { width: 100%; table-layout: fixed; border-collapse: collapse; }
  .c-name { width: 180px; }
  .c-handler { width: 83px; }
  th, td { height: 20px; padding: 0 6px; text-align: left; font-weight: normal; white-space: nowrap; overflow: hidden; }
  td:last-child { padding-right: 0; }
  th { height: 19px; background: #fdfdfd; border-bottom: 1px solid #dcdcdc; }
  .group-row td { height: 21px; color: #1a3fa0; }
  .group-row div { display: flex; align-items: center; gap: 4px; padding: 0 0 2px 6px; }
  .off { color: #a0a0a0; }

  .tabs { display: flex; gap: 2px; height: 27px; padding: 4px 6px 2px; }
  .tabs button { display: flex; align-items: center; gap: 2px; height: 20px; padding: 0 1px; }
  .tabs .on { background: #fff; border: 1px solid #3399ff; padding-right: 3px; }

  .action-list { flex: 1; padding: 4px 4px 0 0; background: linear-gradient(90deg, #fff 10%, #e2e2e2); }
  .block { padding-bottom: 5px; background: linear-gradient(90deg, transparent, #777 60%) 4px calc(100% - 3px) / 100% 1px no-repeat; }
  .block:last-child { background: none; }
  .action { display: grid; grid-template-columns: 16px 1fr; gap: 7px; align-items: center; min-height: 20px; padding-left: 4px; white-space: pre; }
  .action a { color: #0a64cc; }
  .action strong { font-weight: 600; }
  .action .dim { color: #9b9b9b; }
  .action .marked { justify-self: start; line-height: 14px; outline: 3px solid #ed1c24; }

  .status { display: flex; align-items: center; justify-content: space-between; height: 23px; padding: 0 11px 0 5px; background: linear-gradient(90deg, #f0f0f0, #fff 70%); }
  .taskbar { display: flex; height: 40px; background: #66cbea; border: 1px solid #46555c; }
  .taskbar button { display: grid; place-items: center; border-right: 1px solid #2c7b9c; }
  .t-start { width: 51px; }
  .t-open { width: 59px; background: #7bd1ee; }
  .t-plain { width: 65px; }
  .t-many { width: 54px; }
  .t-stack { width: 5px; background: #7bd1ee; border-right: 1px solid #2c7b9c; }
  .taskbar .t-active { width: 60px; margin-left: 2px; background: #a0ddf3; border: 1px solid #2c7b9c; border-width: 0 1px; }
  .tray { flex: 1; display: flex; align-items: center; justify-content: flex-end; gap: 8px; padding-right: 15px; }
  .tray > .ic:first-child { padding-right: 5px; }
  time { text-align: center; line-height: 17px; padding-left: 6px; }

  .dialog { position: absolute; top: 160px; left: 276px; width: 471px; background: #66cbea; border: 1px solid #243a44; padding: 0 7px 7px; }
  .dialog header { display: grid; grid-template-columns: 75px 1fr 75px; height: 30px; }
  .dialog h2 { grid-column: 2; text-align: center; font-size: 14px; line-height: 31px; }
  .dialog .winbtns button { height: 21px; }
  form { display: flex; flex-direction: column; align-items: flex-start; padding: 13px 14px; background: #f0f0f0; border: 1px solid #8fb4c4; border-width: 1px 0; }
  form label { padding: 0 3px; margin-bottom: 3px; }
  .field { display: flex; align-items: center; height: 25px; background: #fff; border: 1px solid #707070; padding: 0 2px 2px; }
  .field input, .field select { flex: 1; min-width: 0; appearance: none; }
  .field.short { width: 291px; }
  .field.medium { width: 396px; height: 23px; padding-right: 5px; padding-bottom: 0; margin-bottom: 12px; }
  .field.low { height: 23px; }
  .grow { flex: 1; }
  .field.focus { border-color: #2d5f8b; }
  .field.focus input { flex: none; field-sizing: content; }
  .caret { width: 1px; height: 15px; background: #000; }
  .hint { padding: 2px 3px 10px; }
  .pair { display: flex; gap: 6px; width: 410px; margin-bottom: 12px; }
  .btn { height: 25px; background: #ddd; border: 1px solid #707070; }
  .dots { width: 31px; }
  .limits { width: 140px; height: 27px; margin-top: 21px; outline: 1px solid #d9252b; outline-offset: -1px; border: 2px solid #707070; }
  .buttons { display: flex; align-self: flex-end; gap: 10px; margin: 47px 1px 0 0; }
  .ok { width: 91px; border-color: #3c7fb1; }
  .cancel { width: 97px; }
</style>
